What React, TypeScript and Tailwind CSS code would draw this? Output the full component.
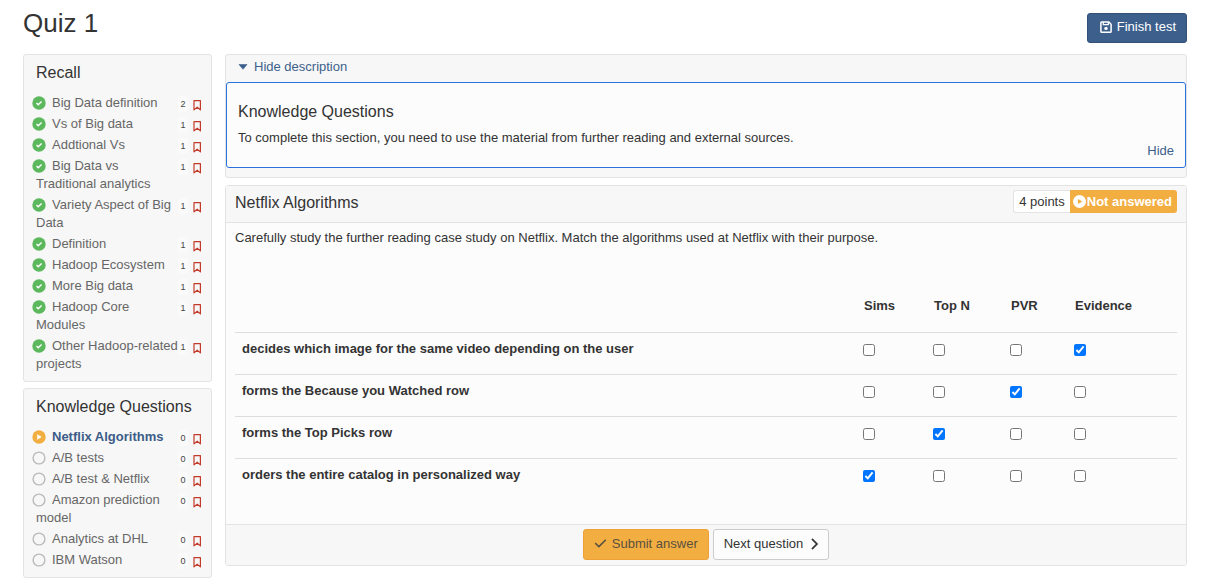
import { useState } from "react";
import { FaCheck, FaChevronRight } from "react-icons/fa6";

type Status = "done" | "current" | "open";
type Item = { title: string; points: number; status: Status };

const done = (title: string, points = 1): Item => ({ title, points, status: "done" });
const open = (title: string): Item => ({ title, points: 0, status: "open" });

const recall: Item[] = [
  done("Big Data definition", 2),
  done("Vs of Big data"),
  done("Addtional Vs"),
  done("Big Data vs Traditional analytics"),
  done("Variety Aspect of Big Data"),
  done("Definition"),
  done("Hadoop Ecosystem"),
  done("More Big data"),
  done("Hadoop Core Modules"),
  done("Other Hadoop-related projects"),
];

const knowledge: Item[] = [
  { title: "Netflix Algorithms", points: 0, status: "current" },
  open("A/B tests"),
  open("A/B test & Netflix"),
  open("Amazon prediction model"),
  open("Analytics at DHL"),
  open("IBM Watson"),
];

const columns = [
  { name: "Sims", width: "w-[70px]" },
  { name: "Top N", width: "w-[77px]" },
  { name: "PVR", width: "w-16" },
  { name: "Evidence", width: "w-[109px]" },
];

const rows = [
  { text: "decides which image for the same video depending on the user", answer: 3 },
  { text: "forms the Because you Watched row", answer: 2 },
  { text: "forms the Top Picks row", answer: 1 },
  { text: "orders the entire catalog in personalized way", answer: 0 },
];

function StatusIcon({ status }: { status: Status }) {
  return (
    <svg viewBox="0 0 14 14" aria-hidden="true" className="-ml-1 mr-[6px] inline-block size-[14px] align-[-3px]">
      {status === "done" && (
        <>
          <circle cx="7" cy="7" r="6.7" fill="#5cb85c" />
          <path d="M4.5 7.1l1.7 1.7 3.4-3.4" fill="none" stroke="#fff" strokeWidth="1.4" />
        </>
      )}
      {status === "current" && (
        <>
          <circle cx="7" cy="7" r="6.7" fill="#f3ae41" />
          <path d="M5.2 4.3v5.4L9.8 7z" fill="#fff" />
        </>
      )}
      {status === "open" && <circle cx="7" cy="7" r="5.9" fill="none" stroke="#bbb" strokeWidth="1.4" />}
    </svg>
  );
}

function BookmarkIcon() {
  return (
    <svg viewBox="0 0 9 11" aria-hidden="true" className="h-[11px] w-[9px]">
      <path d="M1 .6h6.4v9.3L4.2 7.2 1 9.9z" fill="none" stroke="#c23b2a" strokeWidth="1.2" strokeLinejoin="round" />
    </svg>
  );
}

function SaveIcon() {
  return (
    <svg viewBox="0 0 12 12" aria-hidden="true" className="size-3">
      <path d="M1.6.9h7.2l2.3 2.3v7.2a.8.8 0 0 1-.8.8H1.7a.8.8 0 0 1-.8-.8V1.7a.8.8 0 0 1 .7-.8z" fill="none" stroke="#fff" strokeWidth="1.5" />
      <path d="M3.3 1v2.6h5V1" fill="none" stroke="#fff" strokeWidth="1.2" />
      <circle cx="6" cy="7.4" r="1.7" fill="#fff" />
    </svg>
  );
}

function SectionCard({ title, items }: { title: string; items: Item[] }) {
  return (
    <section className="rounded-[3px] border border-[#e3e3e3] bg-[#f7f7f7] pt-2 pr-[9px] pb-2 pl-3">
      <h2 className="text-base leading-5">{title}</h2>
      <ul className="mt-[11px] flex flex-col gap-[3px]">
        {items.map((item) => (
          <li key={item.title} className="flex items-start text-[#666666]">
            <a
              href="#"
              className={`-mr-1 min-w-0 flex-1 ${item.status === "current" ? "font-bold text-[#3b5c88]" : ""}`}
            >
              <StatusIcon status={item.status} />
              {item.title}
            </a>
            <span className="mt-[2px] w-[10px] rounded-[2px] bg-[#fafafa] text-center text-[9px] leading-4 text-[#444444]">
              {item.points}
            </span>
            <button type="button" aria-label={`Bookmark ${item.title}`} className="mt-[6px] ml-[5px]">
              <BookmarkIcon />
            </button>
          </li>
        ))}
      </ul>
    </section>
  );
}

export default function App() {
  const [answers, setAnswers] = useState(rows.map((r) => columns.map((_, i) => i === r.answer)));
  const toggle = (r: number, c: number) =>
    setAnswers((prev) => prev.map((row, i) => row.map((v, j) => (i === r && j === c ? !v : v))));

  return (
    <div className="min-h-screen bg-white pt-2 pr-[30px] pb-2 pl-[23px] font-['Liberation_Sans',Arial,sans-serif] text-[13px] leading-[18px] text-[#333333]">
      <header className="flex items-start justify-between pb-[11px]">
        <h1 className="text-[26px] leading-[30px]">Quiz 1</h1>
        <button
          type="button"
          className="mt-[5px] flex h-[30px] items-center gap-[5px] rounded-[3px] border border-[#335177] bg-[#3d5f8c] pr-[10px] pl-3 pb-[2px] text-white"
        >
          <SaveIcon />
          Finish test
        </button>
      </header>

      <div className="flex items-start gap-[13px]">
        <aside className="flex w-[189px] shrink-0 flex-col gap-[6px]">
          <SectionCard title="Recall" items={recall} />
          <SectionCard title="Knowledge Questions" items={knowledge} />
        </aside>

        <main className="flex min-w-0 flex-1 flex-col gap-[7px]">
          <section className="rounded-[3px] border border-[#e3e3e3] bg-[#f7f7f7] pb-[9px]">
            <a href="#" className="flex items-center gap-[6px] px-3 pt-[3px] pb-[6px] text-[#3d5f8c]">
              <svg viewBox="0 0 10 6" aria-hidden="true" className="h-[6px] w-[10px]">
                <path d="M1 .5h8L5 5.3z" fill="currentColor" stroke="currentColor" strokeWidth=".6" strokeLinejoin="round" />
              </svg>
              Hide description
            </a>
            <div className="rounded-[3px] border border-[#2a73dd] bg-[#fcfcfc] px-[11px] pt-[19px] pb-[7px]">
              <h2 className="text-base leading-5">Knowledge Questions</h2>
              <p className="mt-[7px]">
                To complete this section, you need to use the material from further reading and external sources.
              </p>
              <div className="-mt-[5px] flex justify-end">
                <a href="#" className="text-[#3d5f8c]">
                  Hide
                </a>
              </div>
            </div>
          </section>

          <section className="rounded-[3px] border border-[#e3e3e3] bg-[#fcfcfc]">
            <div className="flex items-start justify-between border-b border-[#e3e3e3] bg-[#f7f7f7] px-[9px] pt-1 pb-[9px]">
              <h2 className="mt-[3px] text-base leading-5">Netflix Algorithms</h2>
              <div className="flex h-[23px]">
                <span className="flex items-center rounded-l-[3px] border border-r-0 border-[#e3e3e3] bg-white px-[5px]">
                  4 points
                </span>
                <span className="flex items-center gap-px rounded-r-[3px] bg-[#f3ae41] pr-[5px] pl-[3px] font-bold text-white">
                  <svg viewBox="0 0 14 14" aria-hidden="true" className="size-[13px]">
                    <circle cx="7" cy="7" r="7" fill="#fff" />
                    <path d="M5.3 4.2v5.6L10 7z" fill="#f3ae41" />
                  </svg>
                  Not answered
                </span>
              </div>
            </div>

            <div className="px-[9px] pt-[6px] pb-6">
              <p>Carefully study the further reading case study on Netflix. Match the algorithms used at Netflix with their purpose.</p>
              <table className="mt-[29px] w-full table-fixed border-collapse">
                <thead>
                  <tr className="h-[56px] text-left align-middle">
                    <td />
                    {columns.map((c) => (
                      <th key={c.name} scope="col" className={`${c.width} px-[7px] pt-1 font-bold`}>
                        {c.name}
                      </th>
                    ))}
                  </tr>
                </thead>
                <tbody>
                  {rows.map((row, r) => (
                    <tr key={row.text} className="h-[42px] border-t border-[#dddddd] align-top">
                      <th scope="row" className="px-[7px] pt-[7px] text-left font-bold">
                        {row.text}
                      </th>
                      {columns.map((c, i) => (
                        <td key={c.name} className="px-[6px] pt-[11px]">
                          <input
                            type="checkbox"
                            aria-label={`${row.text}: ${c.name}`}
                            checked={answers[r][i]}
                            onChange={() => toggle(r, i)}
                            className="block size-3"
                          />
                        </td>
                      ))}
                    </tr>
                  ))}
                </tbody>
              </table>
            </div>

            <div className="flex justify-center gap-1 border-t border-[#e3e3e3] bg-[#f7f7f7] pt-1 pb-[5px]">
              <button
                type="button"
                className="flex h-[31px] items-center gap-[5px] rounded-[3px] border border-[#eea236] bg-[#f3ae41] px-[10px] pb-[2px] text-[#5a5140]"
              >
                <FaCheck className="size-[13px]" />
                Submit answer
              </button>
              <button
                type="button"
                className="flex h-[31px] items-center gap-[5px] rounded-[3px] border border-[#cccccc] bg-[#fcfcfc] pr-2 pl-[10px] pb-[2px]"
              >
                Next question
                <FaChevronRight className="size-3 stroke-[#333333] stroke-[16px]" />
              </button>
            </div>
          </section>
        </main>
      </div>
    </div>
  );
}
